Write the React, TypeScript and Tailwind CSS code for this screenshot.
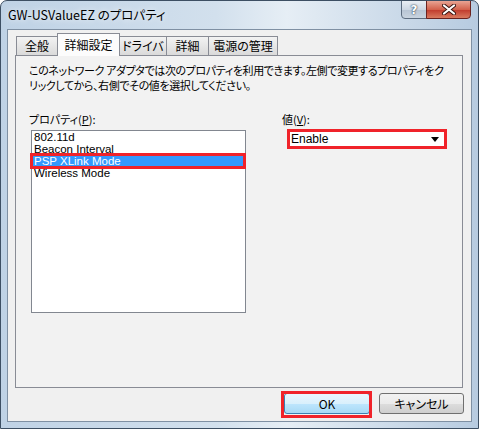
import React from 'react';

const jp = "font-['Noto_Sans_CJK_JP',sans-serif] [font-feature-settings:'palt']";
const latin = "font-['Liberation_Sans','Noto_Sans_CJK_JP',sans-serif]";

const tabs = [
  { label: '全般', cls: 'w-[42px]' },
  { label: '詳細設定', cls: 'w-[63px] -ml-px', active: true },
  { label: 'ドライバ', cls: 'w-[48px] -ml-px' },
  { label: '詳細', cls: 'w-[43px] -ml-px' },
  { label: '電源の管理', cls: 'w-[70px] -ml-px' },
];

const items = ['802.11d', 'Beacon Interval', 'PSP XLink Mode', 'Wireless Mode'];

const App: React.FC = () => {
  return (
    <div className="relative flex h-[429px] w-[479px] flex-col overflow-hidden rounded-t-[7px] border border-[#3d4f63] bg-[linear-gradient(to_right,#bfd2e5,#d2e0ed_45%,#e6eef5_60%,#b7cbe0)]">
      {/* title bar */}
      <div className="flex h-[28px] shrink-0 items-center pl-[7px]">
        <span className={`${jp} text-[12.5px] leading-none text-black [text-shadow:0_0_6px_#fff]`}>
          GW-USValueEZ のプロパティ
        </span>
      </div>

      {/* caption buttons */}
      <div className="absolute -top-px right-[7px] flex h-[19px]">
        <div className="flex w-[26px] items-center justify-center rounded-bl-[4px] border border-[#5d6d80] bg-[linear-gradient(to_bottom,#e9eef4,#cdd7e3_50%,#b7c4d3_51%,#c9d4e0)]">
          <span className="font-['DejaVu_Sans',sans-serif] text-[12px] font-bold leading-none text-white [text-shadow:0_0_1px_#2c3e52,0_0_2px_#2c3e52]">?</span>
        </div>
        <div className="-ml-px flex w-[45px] items-center justify-center rounded-br-[4px] border border-[#6b2320] bg-[linear-gradient(to_bottom,#e8a493,#d2624c_50%,#c0392b_51%,#d97a5f)]">
          <svg width="14" height="11" viewBox="0 0 14 11">
            <path d="M2 1.5 L12 9.5 M12 1.5 L2 9.5" stroke="#3a1410" strokeWidth="4" strokeLinecap="round" />
            <path d="M2 1.5 L12 9.5 M12 1.5 L2 9.5" stroke="#fff" strokeWidth="2.2" strokeLinecap="round" />
          </svg>
        </div>
      </div>

      {/* client area */}
      <div className="mx-[6px] mb-[6px] flex flex-1 flex-col border border-[#7f90a3] bg-[#f0f0f0] pt-[3px]">
        {/* tabs */}
        <div className="relative z-10 -mb-px flex h-[23px] pl-[8px]">
          {tabs.map((t) =>
            t.active ? (
              <div
                key={t.label}
                className={`${t.cls} ${jp} relative z-10 flex h-[23px] items-center justify-center border border-b-0 border-[#898c95] bg-[#fcfcfc] pb-[1px] text-[12px] text-black`}
              >
                {t.label}
              </div>
            ) : (
              <div
                key={t.label}
                className={`${t.cls} ${jp} mt-[3px] flex h-[19px] items-center justify-center border border-b-0 border-[#898c95] bg-[linear-gradient(to_bottom,#f3f3f3,#e6e6e6_50%,#dadada)] text-[12px] text-black`}
              >
                {t.label}
              </div>
            ),
          )}
        </div>

        {/* panel */}
        <div className="ml-[7px] flex h-[333px] w-[448px] flex-col border border-[#898c95] bg-[#f2f2f2] pl-[13px] pt-[7px]">
          <p className={`${jp} whitespace-nowrap text-[11px] leading-[15px] tracking-[-0.4px] text-black`}>
            このネットワーク アダプタでは次のプロパティを利用できます。左側で変更するプロパティをク
            <br />
            リックしてから、右側でその値を選択してください。
          </p>

          <div className="mt-[19px] flex">
            <div className="flex w-[217px] flex-col">
              <span className={`${jp} text-[11px] leading-[15px] text-black`}>
                プロパティ(<span className="underline">P</span>):
              </span>
              <div className="ml-[2px] mt-[3px] h-[183px] w-[215px] border border-[#828790] bg-white">
                {items.map((it) =>
                  it === 'PSP XLink Mode' ? (
                    <div key={it} className={`${latin} relative h-[12px] bg-[#3399ff] pl-[2px] text-[11.5px] leading-[12px] text-white`}>
                      {it}
                      <span className="absolute -bottom-[2px] -left-[2px] -right-px -top-[2px] border-[3px] border-[#f0232a]" />
                    </div>
                  ) : (
                    <div key={it} className={`${latin} h-[12px] pl-[2px] text-[11.5px] leading-[12px] text-black`}>
                      {it}
                    </div>
                  ),
                )}
              </div>
            </div>

            <div className="ml-[36px] flex flex-col">
              <span className={`${jp} text-[11px] leading-[15px] text-black`}>
                値(<span className="underline">V</span>):
              </span>
              <div className="ml-[5px] mt-[2px] flex h-[20px] w-[160px] items-center justify-between border-[3px] border-[#f0232a] bg-white pl-[1px] pr-[5px]">
                <span className={`${latin} text-[12px] leading-none text-black`}>Enable</span>
                <svg width="8" height="5" viewBox="0 0 8 5">
                  <path d="M0 0 H8 L4 5 Z" fill="#000" />
                </svg>
              </div>
            </div>
          </div>
        </div>

        {/* buttons */}
        <div className="mr-[7px] mt-[5px] flex justify-end gap-[9px]">
          <div className="relative">
            <button className={`${jp} flex h-[21px] w-[86px] items-center justify-center rounded-[3px] border border-[#3c7fb1] bg-[linear-gradient(to_bottom,#eaf6fd,#d9f0fc_50%,#bee6fd_51%,#a7d9f5)] text-[12px] leading-none text-black`}>
              OK
            </button>
            <span className="absolute -bottom-[4px] -left-[3px] -right-[2px] -top-[2px] border-[3px] border-[#f0232a]" />
          </div>
          <button className={`${jp} flex h-[21px] w-[85px] items-center justify-center rounded-[3px] border border-[#707070] bg-[linear-gradient(to_bottom,#f2f2f2,#ebebeb_50%,#dddddd_51%,#cfcfcf)] text-[12px] leading-none text-black`}>
            キャンセル
          </button>
        </div>
      </div>
    </div>
  );
};

export default App;
